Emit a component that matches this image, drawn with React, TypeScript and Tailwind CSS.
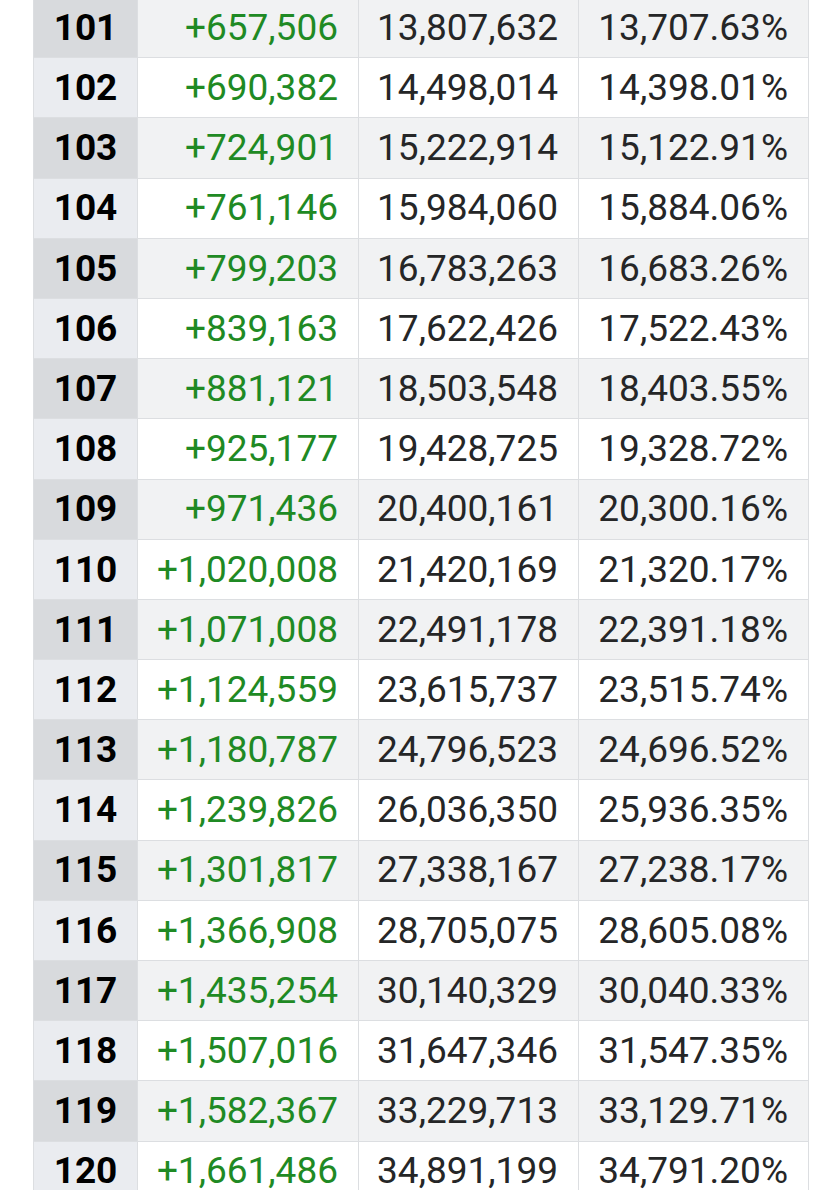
const rows: [number, string, string, string][] = [
  [101, '+657,506', '13,807,632', '13,707.63%'],
  [102, '+690,382', '14,498,014', '14,398.01%'],
  [103, '+724,901', '15,222,914', '15,122.91%'],
  [104, '+761,146', '15,984,060', '15,884.06%'],
  [105, '+799,203', '16,783,263', '16,683.26%'],
  [106, '+839,163', '17,622,426', '17,522.43%'],
  [107, '+881,121', '18,503,548', '18,403.55%'],
  [108, '+925,177', '19,428,725', '19,328.72%'],
  [109, '+971,436', '20,400,161', '20,300.16%'],
  [110, '+1,020,008', '21,420,169', '21,320.17%'],
  [111, '+1,071,008', '22,491,178', '22,391.18%'],
  [112, '+1,124,559', '23,615,737', '23,515.74%'],
  [113, '+1,180,787', '24,796,523', '24,696.52%'],
  [114, '+1,239,826', '26,036,350', '25,936.35%'],
  [115, '+1,301,817', '27,338,167', '27,238.17%'],
  [116, '+1,366,908', '28,705,075', '28,605.08%'],
  [117, '+1,435,254', '30,140,329', '30,040.33%'],
  [118, '+1,507,016', '31,647,346', '31,547.35%'],
  [119, '+1,582,367', '33,229,713', '33,129.71%'],
  [120, '+1,661,486', '34,891,199', '34,791.20%'],
]

function App() {
  return (
    <div className="h-[1190px] overflow-hidden bg-white font-['Roboto','Liberation_Sans',sans-serif] text-[37px] text-[#252627]">
      <div className="-mt-[3px] ml-[33px] w-[776px] border-l border-t border-[#dcdee1]">
        {rows.map(([level, gain, total, pct], i) => {
          const odd = i % 2 === 0
          return (
            <div
              key={level}
              className="grid h-[60.2px] grid-cols-[104px_221px_220px_230px] border-b border-[#dcdee1]"
            >
              <div
                className={`flex items-center justify-center border-r border-[#dcdee1] font-bold text-black ${odd ? 'bg-[#d8dadd]' : 'bg-[#eaecf0]'}`}
              >
                {level}
              </div>
              <div
                className={`flex items-center justify-end border-r border-[#dcdee1] pr-[20px] text-[#1f8a24] ${odd ? 'bg-[#f1f2f3]' : 'bg-white'}`}
              >
                {gain}
              </div>
              <div
                className={`flex items-center justify-end border-r border-[#dcdee1] pr-[20px] ${odd ? 'bg-[#f1f2f3]' : 'bg-white'}`}
              >
                {total}
              </div>
              <div
                className={`flex items-center justify-end border-r border-[#dcdee1] pr-[20px] ${odd ? 'bg-[#f1f2f3]' : 'bg-white'}`}
              >
                {pct}
              </div>
            </div>
          )
        })}
      </div>
    </div>
  )
}

export default App
